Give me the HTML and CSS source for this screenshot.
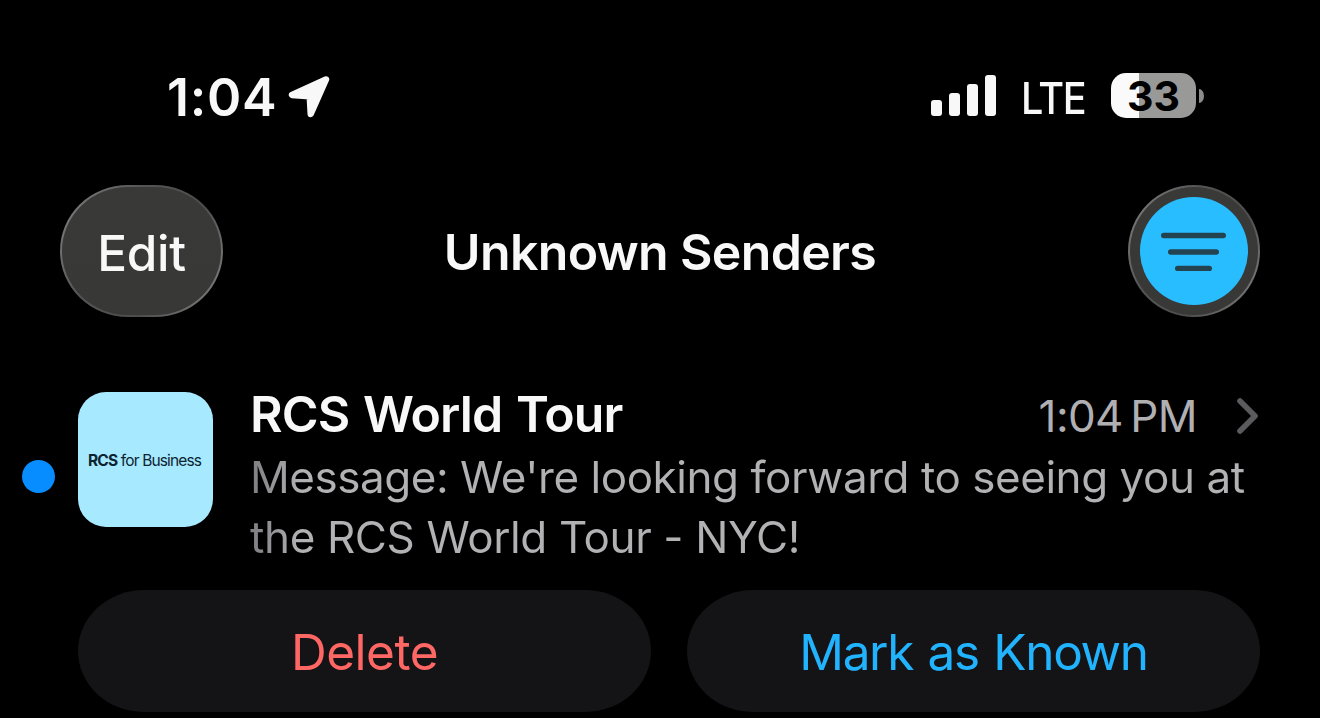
FILE: index.html
```html
<!DOCTYPE html>
<html lang="en">
<head>
    <meta charset="UTF-8">
    <meta name="viewport" content="width=device-width, initial-scale=1.0">
    <title>Unknown Senders</title>
    <link rel="stylesheet" href="styles.css">
</head>
<body>
    <div class="status-bar">
        <span class="clock">1:04</span>
        <svg class="location" width="44" height="44" viewBox="0 0 44 44">
            <path d="M40 4.5 L6 20 L23.7 21.3 L24.7 39 Z" fill="#f8f8f8" stroke="#f8f8f8" stroke-width="6.4" stroke-linejoin="round"/>
        </svg>
        <div class="status-right">
            <svg class="signal" width="66" height="42" viewBox="0 0 66 42" fill="#f8f8f8">
                <rect x="0" y="25" width="11" height="16" rx="3"/>
                <rect x="18" y="18" width="11" height="23" rx="3"/>
                <rect x="36" y="9" width="11" height="32" rx="3"/>
                <rect x="54" y="0" width="11" height="41" rx="3"/>
            </svg>
            <span class="carrier">LTE</span>
            <div class="battery"><span>33</span></div>
            <div class="battery-cap"></div>
        </div>
    </div>

    <header class="nav">
        <button class="edit-btn"><span>Edit</span></button>
        <h1>Unknown Senders</h1>
        <button class="filter-btn">
            <svg width="108" height="108" viewBox="0 0 108 108" fill="none" stroke="#234350" stroke-width="5.4" stroke-linecap="round">
                <circle cx="54" cy="54" r="54" fill="#28bdff" stroke="none"/>
                <path d="M23.7 38.5 H83.3 M30.7 55 H76.3 M37.7 71.4 H69.3"/>
            </svg>
        </button>
    </header>

    <main class="message">
        <div class="unread"></div>
        <div class="avatar"><span class="avatar-text"><b>RCS</b> for Business</span></div>
        <div class="content">
            <div class="top-line">
                <h2>RCS World Tour</h2>
                <span class="time">1:04&#8201;PM</span>
                <svg width="24" height="38" viewBox="0 0 24 38" fill="none" stroke="#5b5b5e" stroke-width="5.6" stroke-linecap="round" stroke-linejoin="round">
                    <path d="M4 4 L19 19 L4 34"/>
                </svg>
            </div>
            <p class="preview"><span class="line-one">Message: We're looking forward to seeing you at</span><br><span class="line-two">the RCS World Tour - NYC!</span></p>
        </div>
    </main>

    <div class="actions">
        <button class="delete"><span>Delete</span></button>
        <button class="known"><span>Mark as Known</span></button>
    </div>
</body>
</html>
```
FILE: styles.css
```css
* {
    box-sizing: border-box;
    font-family: Inter, "Liberation Sans", sans-serif;
}

body {
    margin: 0;
    width: 1320px;
    height: 718px;
    overflow: hidden;
    background: #000;
    color: #f8f8f8;
}

h1, h2, p {
    margin: 0;
}

h1, h2, p, span {
    white-space: nowrap;
}

button {
    border: none;
    padding: 0;
    cursor: pointer;
    color: inherit;
}

/* status bar */
.status-bar {
    display: flex;
    align-items: flex-start;
    height: 185px;
    padding: 72px 116px 0 167px;
}

.clock {
    width: 119px;
    font-size: 52px;
    font-weight: 600;
    line-height: 52px;
    letter-spacing: 0.7px;
}

.location {
    margin-top: 3px;
}

.status-right {
    display: flex;
    align-items: flex-start;
    margin-left: auto;
}

.signal {
    margin-top: 3px;
}

.carrier {
    width: 90px;
    margin-left: 24px;
    font-size: 44px;
    font-weight: 500;
    line-height: 53px;
    letter-spacing: -1.6px;
    transform: scaleX(0.9);
    transform-origin: left;
}

.battery {
    width: 85px;
    height: 45px;
    margin-top: 1px;
    border-radius: 15px;
    background: linear-gradient(90deg, #fafafa 28px, #999998 28px);
    color: #000;
    font-size: 41px;
    font-weight: 700;
    line-height: 46px;
    text-align: center;
}

.battery-cap {
    width: 5px;
    height: 14px;
    margin: 17px 0 0 3px;
    border-radius: 0 5px 5px 0 / 0 7px 7px 0;
    background: #8b8b8b;
}

/* navigation */
.nav {
    display: flex;
    align-items: center;
    justify-content: space-between;
    height: 132px;
    padding: 0 60px;
}

.edit-btn, .filter-btn {
    height: 132px;
    border: 2px solid transparent;
    background:
        linear-gradient(#393938, #383837) padding-box,
        linear-gradient(120deg, #777 10%, #545454 35%, #4c4c4c 65%, #777 90%) border-box;
}

.edit-btn {
    width: 163px;
    border-radius: 68px / 66px;
    font-size: 49.5px;
    font-weight: 500;
    line-height: 62px;
}

.edit-btn span {
    display: block;
    padding-top: 4px;
    letter-spacing: -0.3px;
}

.nav h1 {
    margin-right: 31px;
    padding-top: 1px;
    font-size: 50px;
    font-weight: 600;
    line-height: 60px;
    letter-spacing: -0.65px;
}

.filter-btn {
    display: flex;
    align-items: center;
    justify-content: center;
    width: 132px;
    border-radius: 50%;
}

/* message row */
.message {
    display: flex;
    align-items: flex-start;
    height: 273px;
    padding: 75px 60px 0 22px;
}

.unread {
    flex-shrink: 0;
    width: 33px;
    height: 33px;
    margin: 68px 23px 0 0;
    border-radius: 50%;
    background: #078dff;
}

.avatar {
    display: flex;
    flex-shrink: 0;
    align-items: center;
    width: 135px;
    height: 135px;
    padding: 1px 0 0 10px;
    border-radius: 28px;
    background: #a7e9ff;
    color: #0c2430;
    font-size: 15.5px;
}

.avatar-text {
    letter-spacing: -0.85px;
}

.content {
    flex: 1;
    min-width: 0;
    margin-left: 37px;
}

.top-line {
    display: flex;
    align-items: center;
    height: 48px;
}

.top-line h2 {
    flex: 1;
    padding-bottom: 4px;
    font-size: 50px;
    font-weight: 600;
    line-height: 48px;
    letter-spacing: -0.9px;
    word-spacing: 2px;
}

.time {
    margin-right: 39px;
    color: #b0b0b3;
    font-size: 44px;
    line-height: 48px;
    letter-spacing: -0.6px;
}

.preview {
    margin-top: 7px;
    font-size: 44px;
    line-height: 60px;
}

.preview span {
    background: linear-gradient(90deg, #7c7c81, #b2b2b4 50px);
    background-clip: text;
    color: transparent;
}

.line-one {
    letter-spacing: -0.46px;
}

.line-two {
    letter-spacing: -0.38px;
}

/* actions */
.actions {
    display: grid;
    grid-template-columns: 573px 573px;
    gap: 36px;
    padding-left: 78px;
}

.actions button {
    height: 122px;
    padding-top: 1px;
    border-radius: 66px / 61px;
    background: #141416;
    font-size: 49.5px;
}

.actions .delete {
    color: #ff6765;
    letter-spacing: -0.5px;
}

.actions .known {
    color: #22b3ff;
    letter-spacing: -1.35px;
    word-spacing: 2px;
}
```
